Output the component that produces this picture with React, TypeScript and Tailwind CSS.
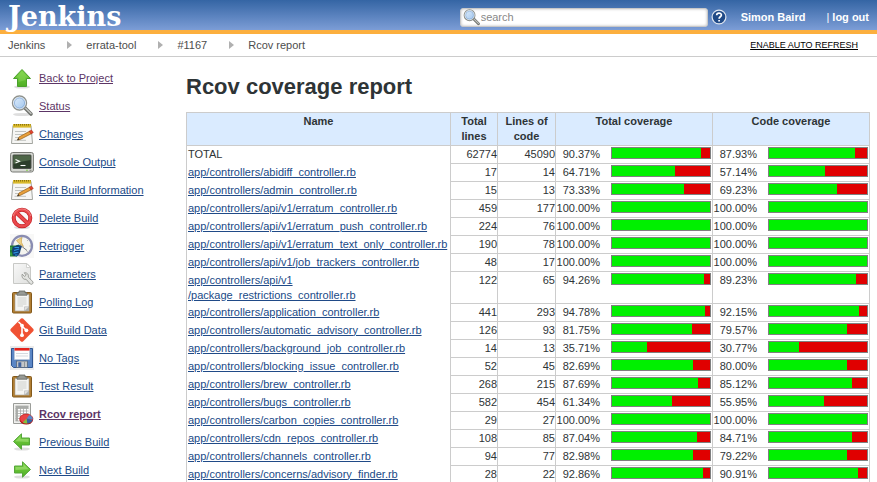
import React from "react";

type Row = { name: string; tail?: string; lines: number; code: number; total: string; cov: string };

const rows: Row[] = [
  { name: "TOTAL", lines: 62774, code: 45090, total: "90.37", cov: "87.93" },
  { name: "app/controllers/abidiff_controller.rb", lines: 17, code: 14, total: "64.71", cov: "57.14" },
  { name: "app/controllers/admin_controller.rb", lines: 15, code: 13, total: "73.33", cov: "69.23" },
  { name: "app/controllers/api/v1/erratum_controller.rb", lines: 459, code: 177, total: "100.00", cov: "100.00" },
  { name: "app/controllers/api/v1/erratum_push_controller.rb", lines: 224, code: 76, total: "100.00", cov: "100.00" },
  { name: "app/controllers/api/v1/erratum_text_only_controller.rb", lines: 190, code: 78, total: "100.00", cov: "100.00" },
  { name: "app/controllers/api/v1/job_trackers_controller.rb", lines: 48, code: 17, total: "100.00", cov: "100.00" },
  { name: "app/controllers/api/v1", tail: "/package_restrictions_controller.rb", lines: 122, code: 65, total: "94.26", cov: "89.23" },
  { name: "app/controllers/application_controller.rb", lines: 441, code: 293, total: "94.78", cov: "92.15" },
  { name: "app/controllers/automatic_advisory_controller.rb", lines: 126, code: 93, total: "81.75", cov: "79.57" },
  { name: "app/controllers/background_job_controller.rb", lines: 14, code: 13, total: "35.71", cov: "30.77" },
  { name: "app/controllers/blocking_issue_controller.rb", lines: 52, code: 45, total: "82.69", cov: "80.00" },
  { name: "app/controllers/brew_controller.rb", lines: 268, code: 215, total: "87.69", cov: "85.12" },
  { name: "app/controllers/bugs_controller.rb", lines: 582, code: 454, total: "61.34", cov: "55.95" },
  { name: "app/controllers/carbon_copies_controller.rb", lines: 29, code: 27, total: "100.00", cov: "100.00" },
  { name: "app/controllers/cdn_repos_controller.rb", lines: 108, code: 85, total: "87.04", cov: "84.71" },
  { name: "app/controllers/channels_controller.rb", lines: 94, code: 77, total: "82.98", cov: "79.22" },
  { name: "app/controllers/concerns/advisory_finder.rb", lines: 28, code: 22, total: "92.86", cov: "90.91" },
];

function Svg({ children }: { children: React.ReactNode }) {
  return (
    <svg viewBox="0 0 24 24" className="size-6 shrink-0" aria-hidden="true">
      {children}
    </svg>
  );
}

function Shadow({ y = 21, rx = 8 }: { y?: number; rx?: number }) {
  return <ellipse cx="12" cy={y} rx={rx} ry="1.6" fill="#000" opacity=".13" />;
}

function Up() {
  return (
    <Svg>
      <Shadow />
      <path d="M12 3.5 20.5 12.5H16.5V20.5H7.5V12.5H3.5Z" fill="url(#green)" stroke="#4aa02c" strokeWidth="1" />
      <path d="M12 5 18 11.5H15.5V14L8.5 16V11.5H6Z" fill="#9be36a" opacity=".35" />
    </Svg>
  );
}

function Arrow({ flip }: { flip?: boolean }) {
  return (
    <Svg>
      <Shadow y={19} />
      <g transform={flip ? "matrix(-1 0 0 1 24 0)" : undefined}>
        <path d="M20.5 11.5 12.5 3.8V8H4.5V15H12.5V19.2Z" fill="url(#green)" stroke="#55a63a" strokeWidth="1" />
        <path d="M13.5 6.2 18.8 11.3 5.5 12V9H13.5Z" fill="#c4f29c" opacity=".4" />
      </g>
    </Svg>
  );
}

function MagnifierShapes() {
  return (
    <>
      <path d="M15 14 21 20" stroke="#6f726d" strokeWidth="3.6" strokeLinecap="round" />
      <path d="M15.6 14.3 21 19.6" stroke="#c3c5c1" strokeWidth="1.4" strokeLinecap="round" />
      <circle cx="9.5" cy="9" r="7" fill="url(#lens)" stroke="#8f928d" strokeWidth="1.4" />
      <circle cx="9.5" cy="9" r="5.8" fill="none" stroke="#e8ebef" strokeWidth="1" />
      <circle cx="9.5" cy="9" r="5.1" fill="none" stroke="#6e9bd0" strokeWidth=".6" />
    </>
  );
}

function Magnifier() {
  return (
    <Svg>
      <Shadow y={20.5} rx={9} />
      <MagnifierShapes />
    </Svg>
  );
}

function Notepad() {
  return (
    <Svg>
      <path d="M3 3.5H21L22.5 21.5H1.5Z" fill="#f6f6f4" stroke="#a3a5a0" strokeWidth="1" />
      <rect x="3" y="2" width="18" height="3.6" fill="#d9b92c" />
      <path d="M4 2.8H20.5" stroke="#8c7412" strokeWidth="1.6" strokeDasharray="1 1" />
      <path d="M5 9.5H16M5 12.5H13M5 15.5H10M4.5 18.3H16" stroke="#c1c3c0" strokeWidth="1" />
      <path d="M7.5 18 9 15 20 9 21.7 11.5 10.5 17.3Z" fill="#e9a03c" stroke="#8f5a12" strokeWidth=".7" />
      <path d="M19.3 9.3 21.5 8 23.3 10.5 21 12Z" fill="#e0442e" stroke="#a52a1c" strokeWidth=".5" />
      <path d="M7.2 18.2 8.3 16.1 9.4 17.5Z" fill="#333" />
    </Svg>
  );
}

function Terminal() {
  return (
    <Svg>
      <rect x=".6" y="2.5" width="22.8" height="19.5" rx="2" fill="#d5d7d2" stroke="#777974" />
      <rect x="3" y="5" width="18" height="13.5" rx=".6" fill="#2b3d2a" stroke="#4c504b" />
      <path d="M3.5 5.5H20.5V10Q13 11 3.5 14Z" fill="#64805c" opacity=".6" />
      <path d="m5.5 9.5 4 1.8-4 1.8" fill="none" stroke="#fff" strokeWidth="1.1" />
      <path d="M10.5 15.5H15.5" stroke="#fff" strokeWidth="1.1" />
      <circle cx="17" cy="20.3" r=".8" fill="#7bd13d" />
      <path d="M19.5 20.3H21.5" stroke="#7c7f79" />
    </Svg>
  );
}

function Forbidden() {
  return (
    <Svg>
      <Shadow y={21.5} />
      <circle cx="12" cy="12" r="8.3" fill="#f8f8f8" stroke="#c42126" strokeWidth="4" />
      <path d="M6 6.2 18 17.8" stroke="#c42126" strokeWidth="4" />
      <circle cx="12" cy="12" r="8.3" fill="none" stroke="#e9494c" strokeWidth="2.6" />
      <path d="M6 6.2 18 17.8" stroke="#e9494c" strokeWidth="2.6" />
      <path d="M3.2 10A9 9 0 0 1 20.8 10" fill="none" stroke="#f79a9a" strokeWidth="1" opacity=".7" />
    </Svg>
  );
}

function ClockRetrigger() {
  return (
    <Svg>
      <rect width="24" height="24" fill="#f8f8f7" />
      <circle cx="12" cy="11.8" r="10" fill="#f4f4ef" stroke="#8a8db2" strokeWidth="2.2" />
      <path d="M12 2.8V4.5M21 12H19.5M18.2 5.8 17.2 6.8M18 18.2 17 17.2" stroke="#999" strokeWidth=".8" />
      <path d="M6.5 6.5 11.5 3.5V8.5L13.5 12.5 9 9.5Z" fill="#ecd083" stroke="#c79c40" strokeWidth=".6" />
      <path d="M10 11 17 16.5" stroke="#777" strokeWidth="1" />
      <path d="M0 11.5H5.5L9 10.5 11 13 10 17 7 22.5H0Z" fill="#247c35" />
      <path d="M3 13 8 11 12 12.5 10.5 16 10 19 7 22.5 3 21.5 2 17Z" fill="#123f79" />
      <path d="M4.5 13.5H9M4 16.5 9 15M3.5 19.2 8.5 18M5 21H7.5" stroke="#2f95e0" strokeWidth="1.2" />
      <path d="M1 13V16M1 18.5V21.5" stroke="#49b64c" strokeWidth="1.2" />
    </Svg>
  );
}

function Params() {
  return (
    <Svg>
      <path d="M3.5 1.5H17L20.5 5V21.5H3.5Z" fill="url(#paper)" stroke="#c8c9c6" />
      <path d="M16.5 1.5V5.5H20.5Z" fill="#fff" stroke="#c8c9c6" strokeWidth=".8" />
      <path
        d="M12.2 12.2 14.6 14.5 16.3 13 14.2 10.8C17 10.2 19 12.6 18.2 15L23 19.8C23.6 21.4 22 22.8 20.5 22.2L16 17.2C13.3 18 11.3 15 12.2 12.2Z"
        fill="#e3e4e1"
        stroke="#8b8d88"
        strokeWidth=".8"
      />
    </Svg>
  );
}

function Clipboard() {
  return (
    <Svg>
      <rect x="2.5" y="2.5" width="19" height="20.5" rx="1" fill="#b17e32" stroke="#83591b" />
      <path d="M5 4.5H19V21H5Z" fill="#f5f5f3" stroke="#a5a29a" strokeWidth=".6" />
      <path d="M7.5 8H16.5M7.5 10H16.5M7.5 12H16.5M7.5 14H16.5M7.5 16H13" stroke="#d0d1ce" strokeWidth="1.1" />
      <path d="M19 16.5 14.5 21H19Z" fill="#aeb0ac" />
      <path d="M14.5 21V16.8H19Z" fill="#e3e4e2" stroke="#aaa" strokeWidth=".5" />
      <path d="M9 1H15V2.8H17V5.2H7V2.8H9Z" fill="#979a95" stroke="#656863" strokeWidth=".8" />
    </Svg>
  );
}

function Git() {
  return (
    <Svg>
      <path d="M11 .6Q12 0 13 .6L23.4 11Q24 12 23.4 13L13 23.4Q12 24 11 23.4L.6 13Q0 12 .6 11Z" fill="#f05133" />
      <path d="M8.4 3.8 12 7.3V17.2M12 8 16.2 12.2" fill="none" stroke="#fff" strokeWidth="1.6" />
      <circle cx="12" cy="7.6" r="1.9" fill="#fff" />
      <circle cx="12" cy="17.2" r="1.9" fill="#fff" />
      <circle cx="16.4" cy="12.3" r="1.9" fill="#fff" />
    </Svg>
  );
}

function Floppy() {
  return (
    <Svg>
      <rect width="24" height="24" fill="#ebebeb" />
      <path d="M1.5 2.5H22.5V21.5H3.5L1.5 19.5Z" fill="#5b86c5" stroke="#2f5591" />
      <rect x="4.5" y="2" width="15" height="11.5" fill="#fdfdfd" stroke="#c3cbd8" strokeWidth=".5" />
      <rect x="4.5" y="2" width="15" height="2.6" fill="#e3231d" />
      <path d="M6 7.5H18M6 10H18" stroke="#d5d9df" strokeWidth="1" />
      <rect x="6.5" y="15" width="11" height="6.5" fill="#c4c6c8" stroke="#53657f" strokeWidth=".8" />
      <rect x="8.3" y="16.3" width="3" height="4.6" fill="#3f62a0" />
      <path d="M14.5 15.5V21" stroke="#919599" />
    </Svg>
  );
}

function Report() {
  return (
    <Svg>
      <path d="M3.5 1.5H20.5V21.5H3.5Z" fill="#f0f0ee" stroke="#9b9d99" />
      <path d="M5.5 4H18.5V19.5H5.5Z" fill="#fff" />
      <path d="M5.5 4H18.5M5.5 6.5H18.5M5.5 9H18.5M5.5 11.5H18.5M5.5 14H18.5M5.5 16.5H18.5M5.5 19H18.5M7.5 4V19M10.5 4V19M13.5 4V19M16.5 4V19" stroke="#a6a8a5" strokeWidth=".8" />
      <path d="M5.5 4H18.5V6.5H7.5V19H5.5Z" fill="#a9aba8" />
      <ellipse cx="16.3" cy="18" rx="6.6" ry="4.5" fill="#a81616" />
      <ellipse cx="16.3" cy="16.8" rx="6.6" ry="4.7" fill="#ea4444" stroke="#bc1919" strokeWidth=".7" />
      <path d="M16.5 16.5 19.5 13Q23 14.5 22.7 17.5Z" fill="#5789ca" />
      <path d="M16.5 16.5 22.6 18Q21 21.3 17.3 21.5Z" fill="#3465a4" />
      <path d="M16.5 16.5 17.3 21.5Q14.5 21.8 12.8 20.4Z" fill="#80c341" />
    </Svg>
  );
}

const tasks: { label: string; icon: React.ReactNode; visited?: boolean; current?: boolean }[] = [
  { label: "Back to Project", icon: <Up />, visited: true },
  { label: "Status", icon: <Magnifier />, visited: true },
  { label: "Changes", icon: <Notepad /> },
  { label: "Console Output", icon: <Terminal /> },
  { label: "Edit Build Information", icon: <Notepad /> },
  { label: "Delete Build", icon: <Forbidden /> },
  { label: "Retrigger", icon: <ClockRetrigger /> },
  { label: "Parameters", icon: <Params /> },
  { label: "Polling Log", icon: <Clipboard /> },
  { label: "Git Build Data", icon: <Git /> },
  { label: "No Tags", icon: <Floppy /> },
  { label: "Test Result", icon: <Clipboard /> },
  { label: "Rcov report", icon: <Report />, visited: true, current: true },
  { label: "Previous Build", icon: <Arrow flip /> },
  { label: "Next Build", icon: <Arrow /> },
];

function Coverage({ value }: { value: string }) {
  return (
    <div className="flex items-start gap-[11px]">
      <span className="flex flex-1 justify-end">{value}%</span>
      <span className="flex h-3 w-[100px] border border-[#808080] bg-[#e00000]">
        <span className="bg-[#00f000]" style={{ width: `${value}%` }} />
      </span>
    </div>
  );
}

const crumbs = ["Jenkins", "errata-tool", "#1167", "Rcov report"];

export default function App() {
  return (
    <div className="min-h-screen bg-white font-['Liberation_Sans',Arial,sans-serif] text-[11px] leading-[15px] text-[#2e3436]">
      <svg className="absolute size-0" aria-hidden="true">
        <defs>
          <linearGradient id="green" x1="0" y1="0" x2="0" y2="1">
            <stop offset="0" stopColor="#7cd346" />
            <stop offset="1" stopColor="#4fae24" />
          </linearGradient>
          <linearGradient id="lens" x1="0" y1="0" x2="1" y2="1">
            <stop offset="0" stopColor="#e4f0fb" />
            <stop offset="1" stopColor="#9cc3ee" />
          </linearGradient>
          <linearGradient id="paper" x1="0" y1="0" x2="1" y2="1">
            <stop offset="0" stopColor="#f8f8f8" />
            <stop offset="1" stopColor="#dfe0de" />
          </linearGradient>
        </defs>
      </svg>

      <header className="flex h-[34px] items-center border-b-4 border-[#fcaf3e] bg-linear-to-b from-[#3465a4] to-[#7c9dd6] px-2 font-bold text-white">
        <a href="#home" className="mt-1 font-['DejaVu_Serif',Georgia,serif] text-[27px] leading-[30px]">
          Jenkins
        </a>
        <form className="mt-1 ml-auto flex items-center gap-[3px]" onSubmit={(e) => e.preventDefault()}>
          <div className="flex h-[19px] w-[248px] items-center rounded-[3px] border border-[#c8c8c8] bg-white pl-0.5 shadow-[inset_0_0_3px_#bbb]">
            <svg viewBox="1 1 22 22" className="size-[17px] shrink-0" aria-hidden="true">
              <MagnifierShapes />
            </svg>
            <input
              type="text"
              aria-label="search"
              placeholder="search"
              className="min-w-0 flex-1 bg-transparent pl-px font-normal text-black outline-none placeholder:text-[#888]"
            />
          </div>
          <a href="#help" aria-label="Search help" className="block">
            <svg viewBox="0 0 16 16" className="size-4" aria-hidden="true">
              <circle cx="8" cy="8" r="6.9" fill="#204a87" stroke="#dfe6f0" strokeWidth="1.2" />
              <path d="M5.7 6.3C5.7 3.3 10.4 3.4 10.4 6.1 10.4 7.8 8.1 7.8 8.1 9.7M8.1 11V12.6" fill="none" stroke="#fff" strokeWidth="1.7" />
            </svg>
          </a>
        </form>
        <nav aria-label="Account" className="mt-1 ml-3.5 flex gap-[21px]">
          <a href="#user">Simon Baird</a>
          <span>
            <span className="font-normal">|</span> <a href="#logout">log out</a>
          </span>
        </nav>
      </header>

      <nav aria-label="Breadcrumb" className="flex h-[23px] items-center border-b border-[#ccc] pr-[19px] pl-2 text-[#4d4d4d]">
        <ol className="flex items-center">
          {crumbs.map((c, i) => (
            <li key={c} className="flex items-center">
              {i > 0 && (
                <svg viewBox="0 0 5 8" className="mr-3.5 ml-[22px] h-2 w-[5px]" aria-hidden="true">
                  <path d="M0 0 5 4 0 8Z" fill="#b0b0b0" />
                </svg>
              )}
              <a href={`#crumb-${i}`}>{c}</a>
            </li>
          ))}
        </ol>
        <a href="#refresh" className="ml-auto text-[9px] text-black underline">
          ENABLE AUTO REFRESH
        </a>
      </nav>

      <div className="flex">
        <nav aria-label="Build" className="w-[186px] shrink-0 pt-[9px] pl-2.5">
          <ul className="flex flex-col gap-1">
            {tasks.map((t) => (
              <li key={t.label}>
                <a
                  href={`#${t.label.replace(/ /g, "-")}`}
                  className={`flex items-center gap-[5px] underline ${t.visited ? "text-[#5c3566]" : "text-[#204a87]"} ${t.current ? "font-bold" : ""}`}
                >
                  {t.icon}
                  {t.label}
                </a>
              </li>
            ))}
          </ul>
        </nav>

        <main className="min-w-0 flex-1 pt-4 pr-[7px]">
          <h1 className="text-[22px] leading-7 font-bold">Rcov coverage report</h1>
          <table className="mt-[11px] w-full table-fixed border-collapse border border-[#ccc]">
            <colgroup>
              <col />
              <col className="w-[47px]" />
              <col className="w-[58px]" />
              <col className="w-[157px]" />
              <col className="w-[157px]" />
            </colgroup>
            <thead>
              <tr className="bg-[#daebff] align-top">
                {["Name", "Total lines", "Lines of code", "Total coverage", "Code coverage"].map((h) => (
                  <th key={h} scope="col" className="border border-[#ccc] px-1 py-px font-bold">
                    {h}
                  </th>
                ))}
              </tr>
            </thead>
            <tbody>
              {rows.map((r, i) => (
                <tr key={i} className="h-[18px] align-top">
                  <td className="px-px py-px whitespace-nowrap">
                    {i === 0 ? (
                      r.name
                    ) : (
                      <a href={`#file-${i}`} className="text-[#204a87] underline">
                        {r.name}
                        {r.tail && <br />}
                        {r.tail}
                      </a>
                    )}
                  </td>
                  <td className="border border-[#ccc] pt-px text-right">{r.lines}</td>
                  <td className="border border-[#ccc] pt-px text-right">{r.code}</td>
                  <td className="border border-[#ccc] pt-px pr-px">
                    <Coverage value={r.total} />
                  </td>
                  <td className="border border-[#ccc] pt-px pr-px">
                    <Coverage value={r.cov} />
                  </td>
                </tr>
              ))}
            </tbody>
          </table>
        </main>
      </div>
    </div>
  );
}
